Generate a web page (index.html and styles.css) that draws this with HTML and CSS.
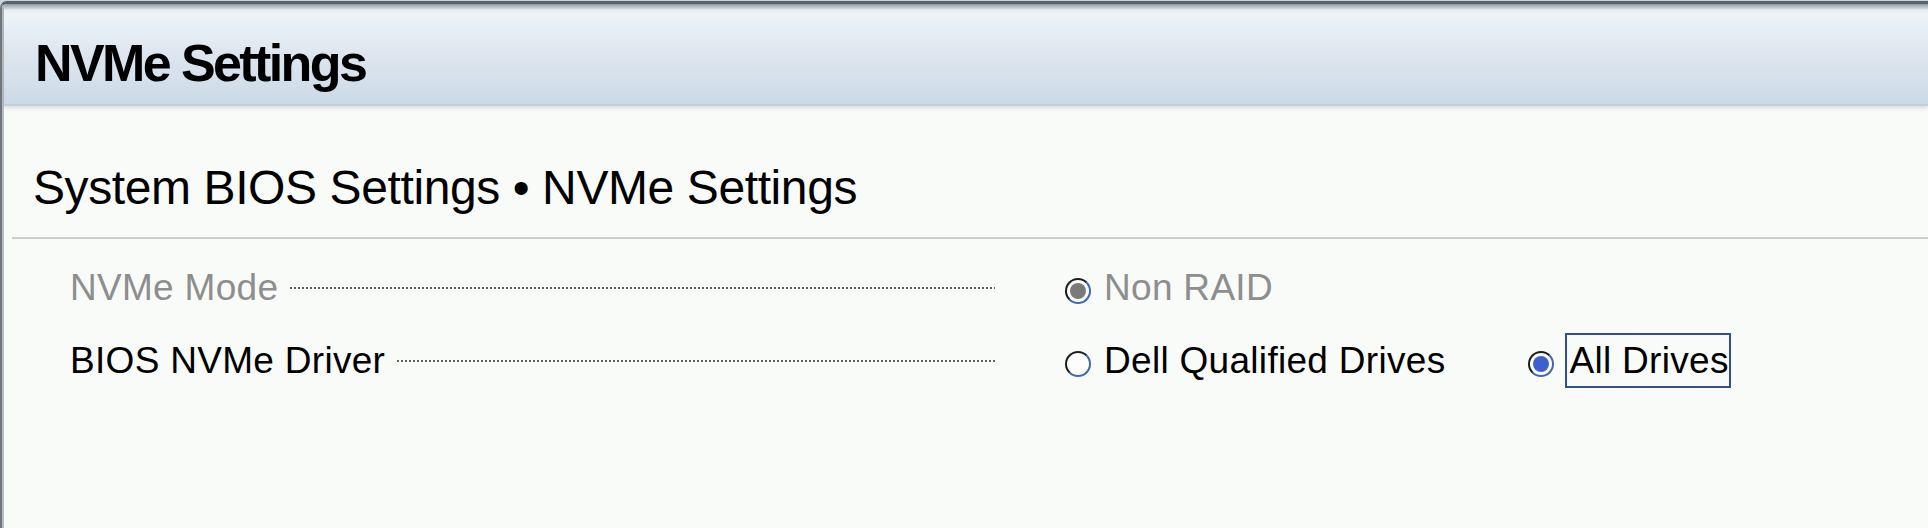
FILE: index.html
```html
<!DOCTYPE html>
<html lang="en">
<head>
<meta charset="utf-8">
<title>NVMe Settings</title>
<link rel="stylesheet" href="styles.css">
</head>
<body>
<div class="page">
  <div class="frame">
    <div class="frame-inner">
      <header class="titlebar"><h1 class="title">NVMe Settings</h1></header>
      <main class="content">
        <h2 class="crumb">System BIOS Settings • NVMe Settings</h2>
        <div class="rule"></div>
        <div class="rows">
          <div class="row is-disabled">
            <div class="label-col"><span class="label">NVMe Mode</span><span class="leader"></span></div>
            <div class="options">
              <label class="option"><span class="radio radio--checked radio--disabled"></span><span class="opt-text">Non RAID</span></label>
            </div>
          </div>
          <div class="row">
            <div class="label-col"><span class="label">BIOS NVMe Driver</span><span class="leader"></span></div>
            <div class="options">
              <label class="option"><span class="radio"></span><span class="opt-text">Dell Qualified Drives</span></label>
              <label class="option option--focus"><span class="radio radio--checked"></span><span class="opt-text">All Drives</span></label>
            </div>
          </div>
        </div>
      </main>
    </div>
  </div>
</div>
</body>
</html>
```
FILE: styles.css
```css
* { box-sizing: border-box; margin: 0; padding: 0; }
html, body { height: 100%; }
body {
  background: #cfd3d6;
  font-family: "Liberation Sans", Arial, sans-serif;
  color: #000;
  overflow: hidden;
}
.page { height: 528px; padding-top: 1px; }
.frame {
  height: 527px;
  border-left: 2px solid #6f777d;
  border-top: 3px solid #56626b;
  border-top-left-radius: 7px;
  background: #f9fbf9;
  overflow: hidden;
}
.frame-inner { height: 100%; border-left: 2px solid #b7bdc2; }
.titlebar {
  height: 102px;
  padding: 33px 0 0 31px;
  background: linear-gradient(to bottom, #8d99a2 0px, #e6ecf0 6px, #eef3f6 10px, #e5edf5 30px, #dde6ee 50px, #d4e0eb 75px, #ccdae5 100px);
  border-bottom: 2px solid #c2cfdb;
  box-shadow: 0 2px 4px rgba(60, 70, 80, 0.18);
  position: relative;
}
.title {
  font-size: 52px;
  line-height: 52px;
  font-weight: bold;
  letter-spacing: -2.6px;
}
.content { padding-left: 8px; }
.crumb {
  font-size: 48px;
  line-height: 48px;
  font-weight: normal;
  letter-spacing: -0.4px;
  margin: 58px 0 0 21px;
}
.rule { height: 2px; background: #cbcfcc; margin-top: 25px; }
.rows { padding-left: 58px; margin-top: 12px; }
.row {
  display: flex;
  align-items: center;
  height: 73px;
  font-size: 37px;
  line-height: 37px;
  letter-spacing: 0.3px;
}
.is-disabled { color: #8e8e8e; }
.label-col { width: 925px; display: flex; align-items: center; flex: none; }
.label { white-space: nowrap; }
.leader {
  flex: 1;
  height: 2px;
  margin-left: 12px;
  background-image: linear-gradient(to right, #5e5e5e 2px, transparent 2px);
  background-size: 4px 2px;
}
.options { display: flex; align-items: center; gap: 83px; margin-left: 70px; }
.option { display: flex; align-items: center; white-space: nowrap; }
.radio {
  flex: none;
  position: relative;
  width: 26px;
  height: 26px;
  margin-top: 6px;
  border-radius: 50%;
  border: 2px solid;
  border-color: #1c1c1c #3d68b4 #3d68b4 #1c1c1c;
  background: #fdfdfd;
  margin-right: 13px;
}
.radio--checked::after {
  content: "";
  position: absolute;
  inset: 3px;
  border-radius: 50%;
  background: #3f5fcc;
}
.radio--disabled::after { background: #7a7a7a; }
.option--focus .radio { margin-right: 11px; }
.option--focus .opt-text {
  border: 2px solid #33508e;
  padding: 7px 0 7px 2px;
}
```
